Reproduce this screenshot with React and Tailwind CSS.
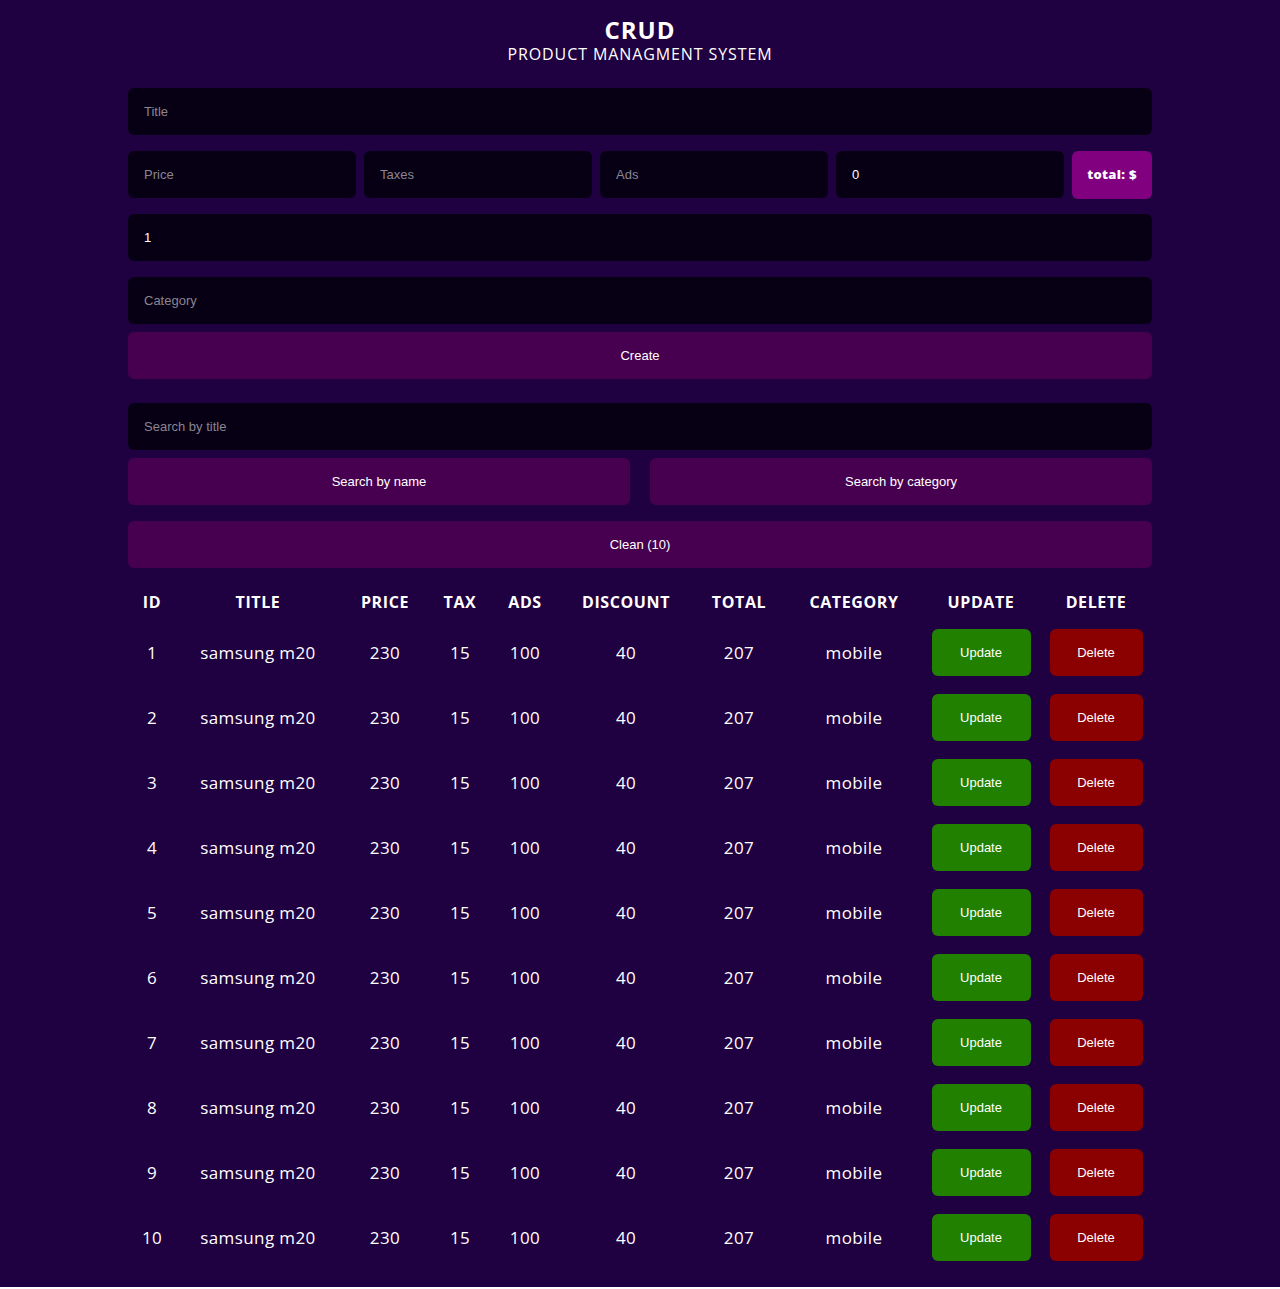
import { useState } from "react";

const rows = Array.from({ length: 10 }, (_, i) => ({
  id: i + 1,
  title: "samsung m20",
  price: 230,
  tax: 15,
  ads: 100,
  discount: 40,
  total: 207,
  category: "mobile",
}));

const inputCls =
  "w-full h-[47px] rounded-[6px] bg-[#070014] px-4 text-[13px] text-white placeholder:text-[#8a8591] outline-none font-['Liberation_Sans',Arial,sans-serif]";
const btnCls =
  "w-full h-[47px] rounded-[6px] bg-[#470050] text-white text-[13px] font-['Liberation_Sans',Arial,sans-serif]";

export default function App() {
  const [count, setCount] = useState("1");
  const [discount, setDiscount] = useState("0");

  return (
    <div className="bg-[#1f0040] text-white pt-[18px] pb-[17px] font-['Open_Sans',sans-serif]">
      <div className="text-center">
        <h2 className="text-[24px] leading-[24px] font-bold tracking-[1px]">CRUD</h2>
        <p className="mt-[2px] text-[16px] leading-[20px] tracking-[0.9px]">PRODUCT MANAGMENT SYSTEM</p>
      </div>

      <div className="w-[1024px] mx-auto mt-[24px]">
        <input className={inputCls} placeholder="Title" />

        <div className="flex gap-2 mt-4 items-start">
          <input className={inputCls} placeholder="Price" />
          <input className={inputCls} placeholder="Taxes" />
          <input className={inputCls} placeholder="Ads" />
          <input
            className={inputCls}
            value={discount}
            onChange={(e) => setDiscount(e.target.value)}
          />
          <div className="shrink-0 w-[80px] h-[48px] rounded-[6px] bg-[#800080] flex items-center justify-center text-[13px] font-extrabold tracking-[0.3px]">
            total: $
          </div>
        </div>

        <input
          className={inputCls + " mt-[15px]"}
          value={count}
          onChange={(e) => setCount(e.target.value)}
        />
        <input className={inputCls + " mt-4"} placeholder="Category" />
        <button className={btnCls + " mt-2"}>Create</button>

        <input className={inputCls + " mt-6"} placeholder="Search by title" />
        <div className="flex gap-5 mt-2">
          <button className={btnCls}>Search by name</button>
          <button className={btnCls}>Search by category</button>
        </div>
        <button className={btnCls + " mt-4"}>Clean (10)</button>

        {/* Table */}
        <table className="w-full mt-[15px] text-center table-fixed">
          <thead>
            <tr className="h-[37px] text-[16px] font-bold uppercase tracking-[0.6px]">
              <th className="w-[48px]">ID</th>
              <th className="w-[164px]">Title</th>
              <th className="w-[90px]">Price</th>
              <th className="w-[60px]">Tax</th>
              <th className="w-[70px]">Ads</th>
              <th className="w-[132px]">Discount</th>
              <th className="w-[94px]">Total</th>
              <th className="w-[136px]">Category</th>
              <th className="w-[118px]">Update</th>
              <th>Delete</th>
            </tr>
          </thead>
          <tbody>
            {rows.map((r) => (
              <tr key={r.id} className="h-[65px] text-[17px] tracking-[0.4px]">
                <td>{r.id}</td>
                <td>{r.title}</td>
                <td>{r.price}</td>
                <td>{r.tax}</td>
                <td>{r.ads}</td>
                <td>{r.discount}</td>
                <td>{r.total}</td>
                <td>{r.category}</td>
                <td>
                  <button className="h-[47px] w-[99px] rounded-[6px] bg-[#228000] text-[13px] tracking-normal font-['Liberation_Sans',Arial,sans-serif]">
                    Update
                  </button>
                </td>
                <td>
                  <button className="h-[47px] w-[93px] rounded-[6px] bg-[#8b0000] text-[13px] tracking-normal font-['Liberation_Sans',Arial,sans-serif]">
                    Delete
                  </button>
                </td>
              </tr>
            ))}
          </tbody>
        </table>
      </div>
    </div>
  );
}
